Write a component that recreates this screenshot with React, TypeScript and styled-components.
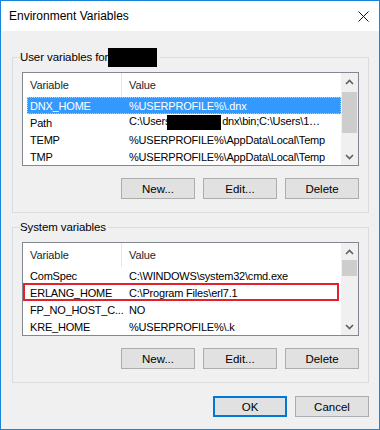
import React from 'react';
import styled, {createGlobalStyle} from "styled-components";

const GlobalStyle = createGlobalStyle`
  html, body {
    margin: 0;
    padding: 0;
    background: #f0f0f0;
  }
`

type Row = { name: string; value: React.ReactNode; selected?: boolean; marked?: boolean }

const Chevron = ({up}: { up?: boolean }) => (
    <svg width="9" height="6" viewBox="0 0 9 6">
        <path d={up ? "M1 5 L4.5 1.5 L8 5" : "M1 1 L4.5 4.5 L8 1"} fill="none" stroke="#606060" strokeWidth="1.6"/>
    </svg>
)

const VarList = ({rows, thumbTop, thumbHeight}: { rows: Row[]; thumbTop: number; thumbHeight: number }) => (
    <ListBox>
        <ListContent>
            <Header>
                <HeaderCell $w={99} $sep>Variable</HeaderCell>
                <HeaderCell>Value</HeaderCell>
            </Header>
            {rows.map(r => (
                <ListRow key={r.name} $selected={r.selected} $marked={r.marked}>
                    <Cell $w={99}>{r.name}</Cell>
                    <Cell>{r.value}</Cell>
                </ListRow>
            ))}
        </ListContent>
        <ScrollBar>
            <ScrollArrow><Chevron up/></ScrollArrow>
            <Track>
                <Thumb $top={thumbTop} $h={thumbHeight}/>
            </Track>
            <ScrollArrow><Chevron/></ScrollArrow>
        </ScrollBar>
    </ListBox>
)

export default function App() {
    const userRows: Row[] = [
        {name: "DNX_HOME", value: "%USERPROFILE%\\.dnx", selected: true},
        {name: "Path", value: <>C:\Users<Hidden $w={54} $h={21} $shift={-3}/>dnx\bin;C:\Users\1…</>},
        {name: "TEMP", value: "%USERPROFILE%\\AppData\\Local\\Temp"},
        {name: "TMP", value: "%USERPROFILE%\\AppData\\Local\\Temp"},
    ]
    const systemRows: Row[] = [
        {name: "ComSpec", value: "C:\\WINDOWS\\system32\\cmd.exe"},
        {name: "ERLANG_HOME", value: "C:\\Program Files\\erl7.1", marked: true},
        {name: "FP_NO_HOST_C...", value: "NO"},
        {name: "KRE_HOME", value: "%USERPROFILE%\\.k"},
    ]
    return (
        <>
            <GlobalStyle/>
            <Window>
                <TitleBar>
                    <Title>Environment Variables</Title>
                    <svg width="11" height="11" viewBox="0 0 11 11">
                        <path d="M0.5 0.5 L10.5 10.5 M10.5 0.5 L0.5 10.5" stroke="#111" strokeWidth="1"/>
                    </svg>
                </TitleBar>
                <Body>
                    <Group>
                        <Legend>User variables for <Hidden $w={49} $h={19} $shift={-3}/></Legend>
                        <VarList rows={userRows} thumbTop={2} thumbHeight={41}/>
                        <ButtonRow>
                            <Button>New...</Button>
                            <Button>Edit...</Button>
                            <Button>Delete</Button>
                        </ButtonRow>
                    </Group>
                    <Group>
                        <Legend>System variables</Legend>
                        <VarList rows={systemRows} thumbTop={0} thumbHeight={16}/>
                        <ButtonRow>
                            <Button>New...</Button>
                            <Button>Edit...</Button>
                            <Button>Delete</Button>
                        </ButtonRow>
                    </Group>
                    <Footer>
                        <Button $default>OK</Button>
                        <Button>Cancel</Button>
                    </Footer>
                </Body>
            </Window>
        </>
    );
}

const Window = styled.div`
  width: 380px;
  height: 430px;
  box-sizing: border-box;
  border: 1px solid #1883d7;
  background: #f0f0f0;
  display: flex;
  flex-direction: column;
  font-family: "Liberation Sans", Arial, sans-serif;
  font-size: 11px;
  letter-spacing: -0.1px;
  color: #000;
`
const TitleBar = styled.div`
  height: 30px;
  flex-shrink: 0;
  background: #fff;
  display: flex;
  align-items: center;
  justify-content: space-between;
  padding: 0 10px 0 8px;
`
const Title = styled.span`
  font-size: 12px;
  letter-spacing: 0;
  color: #000;
`
const Body = styled.div`
  display: flex;
  flex-direction: column;
  gap: 7px;
  padding: 19px 10px 0 11px;
`
const Group = styled.fieldset`
  margin: 0;
  min-width: 0;
  border: 1px solid #dcdcdc;
  padding: 7px 9px 13px 9px;
`
const Legend = styled.legend`
  margin-left: -2px;
  padding: 0 2px 0 0;
  line-height: 15px;
  font-size: 11.5px;
  white-space: nowrap;
`
const Hidden = styled.span<{ $w: number; $h: number; $shift: number }>`
  display: inline-block;
  width: ${p => p.$w}px;
  height: ${p => p.$h}px;
  margin: -3px 1px -3px ${p => p.$shift}px;
  background: #000;
  vertical-align: middle;
`
const ListBox = styled.div`
  height: 94px;
  box-sizing: border-box;
  border: 1px solid #828790;
  background: #fff;
  display: flex;
`
const ListContent = styled.div`
  flex: 1;
  min-width: 0;
  overflow: hidden;
`
const Header = styled.div`
  height: 24px;
  display: flex;
`
const HeaderCell = styled.div<{ $w?: number; $sep?: boolean }>`
  ${p => p.$w ? `width: ${p.$w}px;` : "flex: 1;"}
  flex-shrink: 0;
  display: flex;
  align-items: center;
  padding-left: 7px;
  box-sizing: border-box;
  color: #1e1e1e;
  border-right: ${p => p.$sep ? "1px solid #e5e5e5" : "none"};
`
const ListRow = styled.div<{ $selected?: boolean; $marked?: boolean }>`
  position: relative;
  height: 17px;
  margin-left: 4px;
  display: flex;
  align-items: center;
  box-sizing: border-box;
  background: ${p => p.$selected ? "#3399ff" : "transparent"};
  color: ${p => p.$selected ? "#fff" : "#000"};
  border: 1px dotted ${p => p.$selected ? "#9fcfff" : "transparent"};

  &::after {
    content: "";
    display: ${p => p.$marked ? "block" : "none"};
    position: absolute;
    left: -5px;
    right: 1px;
    top: -2px;
    bottom: -1px;
    border: 2px solid #e3202c;
  }
`
const Cell = styled.div<{ $w?: number }>`
  ${p => p.$w ? `width: ${p.$w}px;` : "flex: 1;"}
  flex-shrink: 0;
  padding-left: 2px;
  box-sizing: border-box;
  letter-spacing: -0.2px;
  white-space: nowrap;
  overflow: hidden;
`
const ScrollBar = styled.div`
  width: 17px;
  flex-shrink: 0;
  background: #f0f0f0;
  display: flex;
  flex-direction: column;
`
const ScrollArrow = styled.div`
  height: 17px;
  flex-shrink: 0;
  display: flex;
  align-items: center;
  justify-content: center;
`
const Track = styled.div`
  flex: 1;
  display: flex;
  flex-direction: column;
  align-items: center;
`
const Thumb = styled.div<{ $top: number; $h: number }>`
  width: 15px;
  margin-top: ${p => p.$top}px;
  height: ${p => p.$h}px;
  background: #cdcdcd;
`
const ButtonRow = styled.div`
  display: flex;
  justify-content: flex-end;
  gap: 8px;
  margin-top: 12px;
`
const Footer = styled.div`
  display: flex;
  justify-content: flex-end;
  gap: 8px;
  margin-top: 6px;
`
const Button = styled.button<{ $default?: boolean }>`
  width: 74px;
  height: 21px;
  box-sizing: border-box;
  padding: 0;
  background: #e1e1e1;
  border: ${p => p.$default ? "2px solid #0078d7" : "1px solid #adadad"};
  font-family: "Liberation Sans", Arial, sans-serif;
  font-size: 11.5px;
  color: #000;
`
